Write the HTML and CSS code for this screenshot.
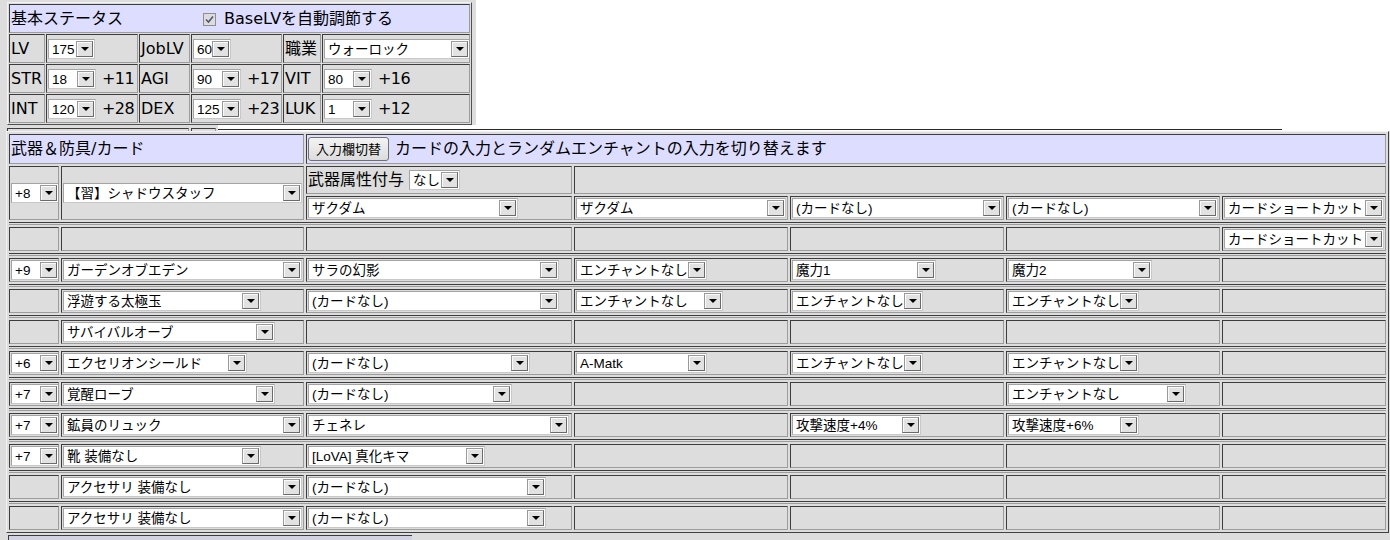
FILE: index.html
```html
<!DOCTYPE html>
<html lang="ja">
<head>
<meta charset="utf-8">
<title>ステータス</title>
<link rel="stylesheet" href="styles.css">
</head>
<body>
<div class="top">
  <div class="stat">
    <div class="cell hd span6"><span>基本ステータス</span><span class="chk"><svg width="9" height="9" viewBox="0 0 9 9"><path d="M1 4.5 L3.5 7 L8 1.5" fill="none" stroke="#4b5870" stroke-width="1.6"/></svg></span><span>BaseLVを自動調節する</span></div>
    <div class="cell">LV</div>
    <div class="cell"><span class="sel w47"><span class="t">175</span><span class="b"></span></span></div>
    <div class="cell">JobLV</div>
    <div class="cell"><span class="sel w38"><span class="t">60</span><span class="b"></span></span></div>
    <div class="cell">職業</div>
    <div class="cell"><span class="sel w146"><span class="t">ウォーロック</span><span class="b"></span></span></div>

    <div class="cell">STR</div>
    <div class="cell"><span class="sel w48"><span class="t">18</span><span class="b"></span></span><span class="bonus">+11</span></div>
    <div class="cell">AGI</div>
    <div class="cell"><span class="sel w48"><span class="t">90</span><span class="b"></span></span><span class="bonus">+17</span></div>
    <div class="cell">VIT</div>
    <div class="cell"><span class="sel w48"><span class="t">80</span><span class="b"></span></span><span class="bonus">+16</span></div>

    <div class="cell">INT</div>
    <div class="cell"><span class="sel w48"><span class="t">120</span><span class="b"></span></span><span class="bonus">+28</span></div>
    <div class="cell">DEX</div>
    <div class="cell"><span class="sel w48"><span class="t">125</span><span class="b"></span></span><span class="bonus">+23</span></div>
    <div class="cell">LUK</div>
    <div class="cell"><span class="sel w48"><span class="t">1</span><span class="b"></span></span><span class="bonus">+12</span></div>
  </div>
</div>

<div class="peek">
  <div class="peek-box"><div class="peek-c1"></div><div class="peek-c2"></div></div>
  <div class="peek-line"></div>
</div>

<div class="main">
  <div class="eq">
    <div class="cell hd c12">武器＆防具/カード</div>
    <div class="cell hd c37"><span class="btn">入力欄切替</span><span class="note">カードの入力とランダムエンチャントの入力を切り替えます</span></div>

    <div class="cell rs2"><span class="sel w48"><span class="t">+8</span><span class="b"></span></span></div>
    <div class="cell rs2"><span class="sel w239"><span class="t">【習】シャドウスタッフ</span><span class="b"></span></span></div>
    <div class="cell">武器属性付与<span class="sel w51 ml4"><span class="t">なし</span><span class="b"></span></span></div>
    <div class="cell c47"></div>
    <div class="cell"><span class="sel w210"><span class="t">ザクダム</span><span class="b"></span></span></div>
    <div class="cell"><span class="sel w210"><span class="t">ザクダム</span><span class="b"></span></span></div>
    <div class="cell"><span class="sel w210"><span class="t">(カードなし)</span><span class="b"></span></span></div>
    <div class="cell"><span class="sel w210"><span class="t">(カードなし)</span><span class="b"></span></span></div>
    <div class="cell"><span class="sel w160"><span class="t">カードショートカット</span><span class="b"></span></span></div>

    <div class="sep"></div>
    <div class="cell"></div><div class="cell"></div><div class="cell"></div><div class="cell"></div><div class="cell"></div><div class="cell"></div>
    <div class="cell"><span class="sel w160"><span class="t">カードショートカット</span><span class="b"></span></span></div>

    <div class="sep"></div>
    <div class="cell"><span class="sel w48"><span class="t">+9</span><span class="b"></span></span></div>
    <div class="cell"><span class="sel w239"><span class="t">ガーデンオブエデン</span><span class="b"></span></span></div>
    <div class="cell"><span class="sel w251"><span class="t">サラの幻影</span><span class="b"></span></span></div>
    <div class="cell"><span class="sel w131"><span class="t">エンチャントなし</span><span class="b"></span></span></div>
    <div class="cell"><span class="sel w144"><span class="t">魔力1</span><span class="b"></span></span></div>
    <div class="cell"><span class="sel w144"><span class="t">魔力2</span><span class="b"></span></span></div>
    <div class="cell"></div>

    <div class="sep"></div>
    <div class="cell"></div>
    <div class="cell"><span class="sel w198"><span class="t">浮遊する太極玉</span><span class="b"></span></span></div>
    <div class="cell"><span class="sel w251"><span class="t">(カードなし)</span><span class="b"></span></span></div>
    <div class="cell"><span class="sel w147"><span class="t">エンチャントなし</span><span class="b"></span></span></div>
    <div class="cell"><span class="sel w131"><span class="t">エンチャントなし</span><span class="b"></span></span></div>
    <div class="cell"><span class="sel w131"><span class="t">エンチャントなし</span><span class="b"></span></span></div>
    <div class="cell"></div>

    <div class="sep"></div>
    <div class="cell"></div>
    <div class="cell"><span class="sel w212"><span class="t">サバイバルオーブ</span><span class="b"></span></span></div>
    <div class="cell"></div><div class="cell"></div><div class="cell"></div><div class="cell"></div><div class="cell"></div>

    <div class="sep"></div>
    <div class="cell"><span class="sel w48"><span class="t">+6</span><span class="b"></span></span></div>
    <div class="cell"><span class="sel w184"><span class="t">エクセリオンシールド</span><span class="b"></span></span></div>
    <div class="cell"><span class="sel w222"><span class="t">(カードなし)</span><span class="b"></span></span></div>
    <div class="cell"><span class="sel w131"><span class="t">A-Matk</span><span class="b"></span></span></div>
    <div class="cell"><span class="sel w131"><span class="t">エンチャントなし</span><span class="b"></span></span></div>
    <div class="cell"><span class="sel w131"><span class="t">エンチャントなし</span><span class="b"></span></span></div>
    <div class="cell"></div>

    <div class="sep"></div>
    <div class="cell"><span class="sel w48"><span class="t">+7</span><span class="b"></span></span></div>
    <div class="cell"><span class="sel w212"><span class="t">覚醒ローブ</span><span class="b"></span></span></div>
    <div class="cell"><span class="sel w204"><span class="t">(カードなし)</span><span class="b"></span></span></div>
    <div class="cell"></div>
    <div class="cell"></div>
    <div class="cell"><span class="sel w178"><span class="t">エンチャントなし</span><span class="b"></span></span></div>
    <div class="cell"></div>

    <div class="sep"></div>
    <div class="cell"><span class="sel w48"><span class="t">+7</span><span class="b"></span></span></div>
    <div class="cell"><span class="sel w239"><span class="t">鉱員のリュック</span><span class="b"></span></span></div>
    <div class="cell"><span class="sel w261"><span class="t">チェネレ</span><span class="b"></span></span></div>
    <div class="cell"></div>
    <div class="cell"><span class="sel w129"><span class="t">攻撃速度+4%</span><span class="b"></span></span></div>
    <div class="cell"><span class="sel w131"><span class="t">攻撃速度+6%</span><span class="b"></span></span></div>
    <div class="cell"></div>

    <div class="sep"></div>
    <div class="cell"><span class="sel w48"><span class="t">+7</span><span class="b"></span></span></div>
    <div class="cell"><span class="sel w198"><span class="t">靴 装備なし</span><span class="b"></span></span></div>
    <div class="cell"><span class="sel w177"><span class="t">[LoVA] 真化キマ</span><span class="b"></span></span></div>
    <div class="cell"></div><div class="cell"></div><div class="cell"></div><div class="cell"></div>

    <div class="sep"></div>
    <div class="cell"></div>
    <div class="cell"><span class="sel w239"><span class="t">アクセサリ 装備なし</span><span class="b"></span></span></div>
    <div class="cell"><span class="sel w238"><span class="t">(カードなし)</span><span class="b"></span></span></div>
    <div class="cell"></div><div class="cell"></div><div class="cell"></div><div class="cell"></div>

    <div class="sep"></div>
    <div class="cell"></div>
    <div class="cell"><span class="sel w239"><span class="t">アクセサリ 装備なし</span><span class="b"></span></span></div>
    <div class="cell"><span class="sel w238"><span class="t">(カードなし)</span><span class="b"></span></span></div>
    <div class="cell"></div><div class="cell"></div><div class="cell"></div><div class="cell"></div>
  </div>
  <div class="next"></div>
</div>
</body>
</html>
```

FILE: styles.css
```css
* { box-sizing: border-box; }
html, body { margin: 0; padding: 0; background: #fff; }
body {
  font-family: "DejaVu Sans", "Noto Sans CJK JP", sans-serif;
  font-size: 16px;
  color: #000;
  line-height: 20px;
}

/* ---------- top status table ---------- */
.top {
  width: 476px;
  height: 125px;
  background: #ddd;
  padding: 2px 0 0 7px;
}
.stat {
  width: 465px;
  display: grid;
  grid-template-columns: 36px 92px 51px 91px 38px 148px;
  grid-auto-rows: 29px;
  gap: 1px;
  padding: 1px;
  border: 1px solid;
  border-color: #f2f2f2 #505050 #505050 #f2f2f2;
  background: #ddd;
}
.cell {
  background: #ddd;
  border: 1px solid;
  border-color: #3c3c3c #9c9c9c #9c9c9c #3c3c3c;
  display: flex;
  align-items: center;
  padding: 0 1px;
  white-space: nowrap;
  overflow: hidden;
}
.stat .cell { padding-top: 1px; }
.hd { background: #ddf; }
.span6 { grid-column: 1 / -1; }
.chk {
  width: 13px;
  height: 13px;
  margin: 0 8px 0 80px;
  background: #dcdcdc;
  border: 1px solid #8e8e8e;
  display: flex;
  align-items: center;
  justify-content: center;
}
.chk svg { display: block; }
.bonus { margin-left: 6px; letter-spacing: -0.6px; }

/* ---------- select imitation ---------- */
.sel {
  display: inline-flex;
  align-items: center;
  flex: none;
  height: 20px;
  background: #fff;
  border: 1px solid;
  border-color: #a4a4a4 #c8c8c8 #c8c8c8 #a4a4a4;
  font-family: "Liberation Sans", "Noto Sans CJK JP", sans-serif;
  font-size: 13.5px;
  line-height: 18px;
}
.sel .t {
  flex: 1;
  min-width: 0;
  padding: 1px 0 0 3px;
  overflow: hidden;
  white-space: nowrap;
}
.sel .b {
  flex: none;
  width: 17px;
  height: 16px;
  margin-right: 1px;
  background: #e2e2e2;
  border: 1px solid;
  border-color: #9a9a9a #6a6a6a #6a6a6a #9a9a9a;
  box-shadow: inset 1px 1px 0 #fafafa;
  display: flex;
  align-items: center;
  justify-content: center;
}
.sel .b::after {
  content: "";
  width: 0;
  height: 0;
  border-left: 4px solid transparent;
  border-right: 4px solid transparent;
  border-top: 4px solid #000;
}
.ml4 { margin-left: 5px; }

.w38 { width: 38px; }
.w47 { width: 47px; }
.w48 { width: 48px; }
.w51 { width: 51px; }
.w129 { width: 129px; }
.w131 { width: 131px; }
.w144 { width: 144px; }
.w146 { width: 146px; }
.w147 { width: 147px; }
.w160 { width: 160px; }
.w177 { width: 177px; }
.w178 { width: 178px; }
.w184 { width: 184px; }
.w198 { width: 198px; }
.w204 { width: 204px; }
.w210 { width: 210px; }
.w212 { width: 212px; }
.w222 { width: 222px; }
.w238 { width: 238px; }
.w239 { width: 239px; }
.w251 { width: 251px; }
.w261 { width: 261px; }

/* ---------- strip peeking between the tables ---------- */
.peek {
  height: 6px;
  display: flex;
  background: #fff;
  overflow: hidden;
}
.peek-box {
  width: 218px;
  height: 6px;
  background: #ddd;
  padding: 1px 1px 0 7px;
  display: flex;
  gap: 2px;
}
.peek-box > div {
  height: 8px;
  border: 1px solid;
  border-color: #3c3c3c #9c9c9c #9c9c9c #3c3c3c;
  margin-top: 2px;
}
.peek-c1 { width: 182px; }
.peek-c2 { width: 25px; }
.peek-line {
  width: 1064px;
  height: 1px;
  margin-top: 4px;
  background: #2a2a2a;
}

/* ---------- equipment table ---------- */
.main {
  background: #ddd;
  padding: 0 0 0 6px;
  height: 409px;
}
.eq {
  width: 1383px;
  display: grid;
  grid-template-columns: 50px 243px 266px 214px 214px 214px 164px;
  grid-template-rows: 30px 28px 24px repeat(10, 3px 24px);
  gap: 2px;
  padding: 2px;
  border: 1px solid;
  border-color: #f2f2f2 #404040 #404040 #f2f2f2;
  background: #ddd;
}
.c12 { grid-column: 1 / 3; }
.c37 { grid-column: 3 / 8; }
.c47 { grid-column: 4 / 8; }
.rs2 { grid-row: span 2; }
.sep {
  grid-column: 1 / -1;
  border-top: 1px solid #3c3c3c;
  border-bottom: 1px solid #9c9c9c;
  background: #ddd;
}
.btn {
  height: 24px;
  padding: 0 7px;
  border: 1px solid #707070;
  border-radius: 3px;
  background: linear-gradient(#f3f3f3, #dcdcdc);
  font-size: 13px;
  line-height: 22px;
  font-family: "Noto Sans CJK JP", sans-serif;
}
.note { margin-left: 6px; }

.next {
  width: 404px;
  height: 10px;
  margin: 2px 0 0 2px;
  border-top: 1px solid #3c3c3c;
  border-left: 1px solid #3c3c3c;
  background: #d2d2e2;
}
```
